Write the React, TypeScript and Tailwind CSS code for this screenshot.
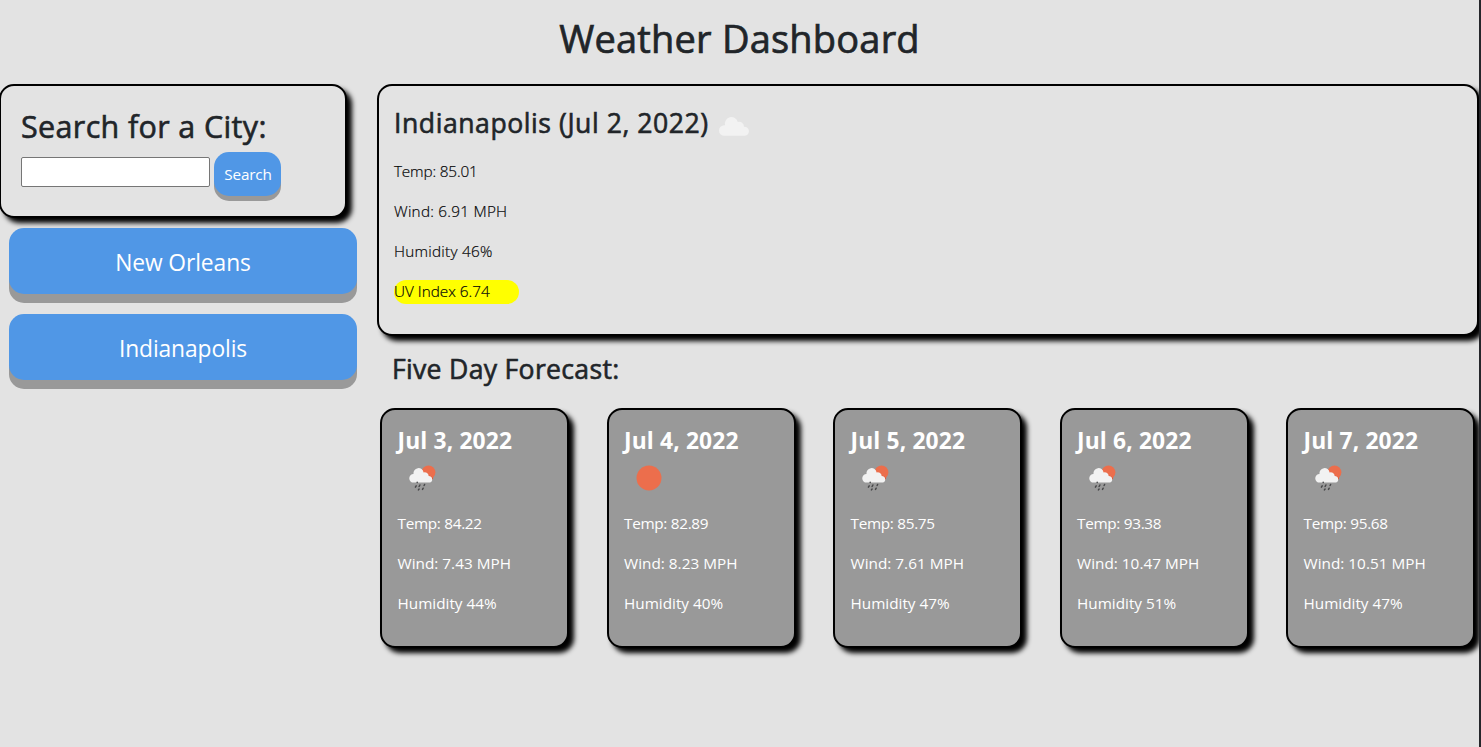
type Icon = "cloud" | "rain" | "sun";

function WeatherIcon({ kind, className }: { kind: Icon; className: string }) {
  if (kind === "sun") {
    return (
      <svg viewBox="0 0 50 50" className={className}>
        <circle cx="25" cy="25" r="12.5" fill="#ec6e4c" />
      </svg>
    );
  }
  if (kind === "cloud") {
    return (
      <svg viewBox="0 0 50 50" className={className}>
        <path
          d="M15.300 35.800a5.300 5.300 0 0 1 0-10.600l.8 0a6.500 6.500 0 0 1 12.700-3.200 4.900 4.900 0 0 1 6.200 4.800 4.500 4.500 0 0 1 .8 9z"
          fill="#f2f2f2"
        />
      </svg>
    );
  }
  return (
    <svg viewBox="0 0 50 50" className={className}>
      <circle cx="31.5" cy="19.3" r="6.9" fill="#ec6e4c" />
      <path d="M26 20.500c2.500-1.600 5.200-.5 6.300 2.400 2 .2 3.600 1.600 3.800 3.200l-2.500 1.500-7-4z" fill="#e0431f" />
      <path
        d="M16.600 29.600a4.300 4.300 0 0 1-.1-8.600 5.100 5.100 0 0 1 10.100-1.600 4 4 0 0 1 5.200 3.600 3.400 3.400 0 0 1 1.200 6.600z"
        fill="#f2f2f2"
      />
      <g stroke="#48484a" strokeWidth="1.5" strokeLinecap="round">
        <path d="M20.200 29.200v.4M19.200 32.800l-.8 1.400M22.900 32l-.8 1.500M27.600 31.500l-.5 1M22.100 36l-.7.900M26.200 35.200l-.7 1.200" />
      </g>
    </svg>
  );
}

type Day = { date: string; icon: Icon; temp: string; wind: string; humidity: string };

const days: Day[] = [
  { date: "Jul 3, 2022", icon: "rain", temp: "84.22", wind: "7.43", humidity: "44" },
  { date: "Jul 4, 2022", icon: "sun", temp: "82.89", wind: "8.23", humidity: "40" },
  { date: "Jul 5, 2022", icon: "rain", temp: "85.75", wind: "7.61", humidity: "47" },
  { date: "Jul 6, 2022", icon: "rain", temp: "93.38", wind: "10.47", humidity: "51" },
  { date: "Jul 7, 2022", icon: "rain", temp: "95.68", wind: "10.51", humidity: "47" },
];

function DayCard({ day }: { day: Day }) {
  return (
    <article className="h-[240px] w-[189px] shrink-0 rounded-[15px] border-2 border-black bg-[#999999] pt-4 pl-[15.5px] text-white shadow-[5px_5px_5px_black]">
      <h3 className="text-[22.8px] leading-[29px] font-bold tracking-[0.15px] whitespace-nowrap">{day.date}</h3>
      <WeatherIcon kind={day.icon} className="mt-[-2px] ml-[-0.5px] h-[50px] w-[50px]" />
      <div className="mt-2 flex flex-col gap-4 text-[15.3px] leading-6 whitespace-nowrap">
        <p className="tracking-[-0.3px]">Temp: {day.temp}</p>
        <p className="tracking-[0.02px]">Wind: {day.wind} MPH</p>
        <p>Humidity {day.humidity}%</p>
      </div>
    </article>
  );
}

export default function App() {
  return (
    <div className="flex h-[747px] w-full overflow-hidden bg-[#e3e3e3] font-['Open_Sans','Noto_Sans',sans-serif] text-[#212529]">
      <div className="flex min-w-0 flex-1 flex-col overflow-hidden">
        <h1 className="h-[84px] pt-[14px] text-center text-[38px] leading-[48px] font-medium tracking-[0.2px] [-webkit-text-stroke:0.7px_#212529]">
          Weather Dashboard
        </h1>
        <div className="flex">
          <aside className="w-[377px] shrink-0">
            <section className="ml-[-1px] h-[134px] w-[348px] rounded-[15px] border-2 border-black bg-[#e3e3e3] px-5 pt-[21px] shadow-[5px_5px_5px_black]">
              <h2 className="text-[30.5px] leading-[38px] font-medium tracking-[0.35px] whitespace-nowrap [-webkit-text-stroke:0.6px_#212529]">
                Search for a City:
              </h2>
              <form className="flex items-start gap-1 pt-[7px]" onSubmit={(e) => e.preventDefault()}>
                <input
                  aria-label="City"
                  className="mt-[5px] h-[30px] w-[189px] rounded-[2px] border border-[#767676] bg-white px-1 text-[15px] outline-none"
                />
                <button className="h-[44px] w-[67px] rounded-[15px] bg-[#5097e6] pl-px text-[15.3px] tracking-[-0.15px] text-white shadow-[0_5px_#999999]">
                  Search
                </button>
              </form>
            </section>
            <div className="mt-[10px] ml-[9px] flex w-[348px] flex-col gap-5">
              {["New Orleans", "Indianapolis"].map((city) => (
                <button
                  key={city}
                  className="h-[66px] rounded-[15px] bg-[#5097e6] pt-1 text-[22.8px] tracking-[-0.1px] text-white shadow-[0_9px_#999999]"
                >
                  {city}
                </button>
              ))}
            </div>
          </aside>
          <main className="w-[1102px] shrink-0">
            <section className="h-[252px] rounded-[15px] border-2 border-black bg-[#e3e3e3] pt-[14px] pl-[15px] shadow-[5px_5px_5px_black]">
              <div className="flex h-[50px] items-center">
                <h2 className="pb-[5px] text-[26.6px] leading-[34px] font-medium tracking-[0.55px] whitespace-nowrap [-webkit-text-stroke:0.6px_#212529]">
                  Indianapolis (Jul 2, 2022)
                </h2>
                <WeatherIcon kind="cloud" className="h-[50px] w-[50px]" />
              </div>
              <div className="mt-[9px] flex flex-col gap-4 text-[15.3px] leading-6 font-light text-black [-webkit-text-stroke:0.2px_#101215]">
                <p className="tracking-[-0.15px]">Temp: 85.01</p>
                <p className="tracking-[0.25px]">Wind: 6.91 MPH</p>
                <p className="tracking-[0.25px]">Humidity 46%</p>
                <p className="mt-px w-[125px] rounded-[15px] bg-[#ffff00]">
                  <span className="relative top-[-1px]">UV Index 6.74</span>
                </p>
              </div>
            </section>
            <h2 className="mt-4 pl-[15px] text-[26.6px] leading-[34px] font-medium tracking-[0.3px] [-webkit-text-stroke:0.6px_#212529]">
              Five Day Forecast:
            </h2>
            <div className="mt-[22px] ml-[3px] flex gap-[37.5px]">
              {days.map((day) => (
                <DayCard key={day.date} day={day} />
              ))}
            </div>
          </main>
        </div>
      </div>
      <div className="w-[2px] shrink-0 bg-[#25262a]" />
    </div>
  );
}
